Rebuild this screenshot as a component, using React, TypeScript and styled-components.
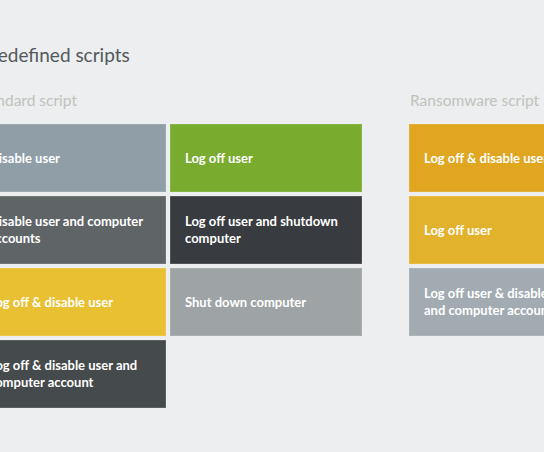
import styled, { createGlobalStyle } from 'styled-components'

const GlobalStyle = createGlobalStyle`
  html, body {
    margin: 0;
    padding: 0;
    background: #eceeef;
    overflow: hidden;
  }
`

const Page = styled.main`
  display: flex;
  flex-flow: column;
  margin-left: -26px;
  padding-top: 42px;
  font-family: Lato, 'Liberation Sans', sans-serif;
`

const Title = styled.h1`
  margin: 0 0 0 6px;
  font-size: 19px;
  font-weight: 400;
  line-height: 25px;
  color: #53585c;
`

const Groups = styled.div`
  display: flex;
  flex-flow: row;
  gap: 47px;
  margin-top: 23px;
`

const Group = styled.section`
  display: flex;
  flex-flow: column;
  flex-shrink: 0;
`

const GroupTitle = styled.h2`
  margin: 0 0 14px 1px;
  font-size: 15.5px;
  font-weight: 400;
  line-height: 20px;
  color: #bfc2bc;
  white-space: nowrap;
`

const Tiles = styled.div<{ $cols: number }>`
  display: grid;
  grid-template-columns: repeat(${(p) => p.$cols}, 192px);
  grid-auto-rows: 68px;
  gap: 4px;
`

const Tile = styled.button<{ $bg: string }>`
  display: flex;
  align-items: center;
  padding: 0 14px;
  border: 1px solid rgba(255, 255, 255, 0.12);
  background: ${(p) => p.$bg};
  color: #fff;
  font-family: inherit;
  font-size: 13px;
  font-weight: 700;
  line-height: 17px;
  text-align: left;
  cursor: pointer;
`

const standard = [
  { label: 'Disable user', bg: '#8f9ea7' },
  { label: 'Log off user', bg: '#79ab2e' },
  { label: 'Disable user and computer accounts', bg: '#5f6467' },
  { label: 'Log off user and shutdown computer', bg: '#383c40' },
  { label: 'Log off & disable user', bg: '#e9c031' },
  { label: 'Shut down computer', bg: '#9ea3a5' },
  { label: 'Log off & disable user and computer account', bg: '#454a4c' },
]

const ransomware = [
  { label: 'Log off & disable user', bg: '#e0a620' },
  { label: 'Log off user', bg: '#e3b22d' },
  { label: 'Log off user & disable user and computer account', bg: '#a1abb1' },
]

const App = () => {
  return (
    <>
      <GlobalStyle />
      <Page>
        <Title>Predefined scripts</Title>

        <Groups>
          <Group>
            <GroupTitle>Standard script</GroupTitle>
            <Tiles $cols={2}>
              {standard.map((t) => (
                <Tile key={t.label} $bg={t.bg}>{t.label}</Tile>
              ))}
            </Tiles>
          </Group>

          <Group>
            <GroupTitle>Ransomware script</GroupTitle>
            <Tiles $cols={1}>
              {ransomware.map((t) => (
                <Tile key={t.label} $bg={t.bg}>{t.label}</Tile>
              ))}
            </Tiles>
          </Group>
        </Groups>
      </Page>
    </>
  )
}

export default App
